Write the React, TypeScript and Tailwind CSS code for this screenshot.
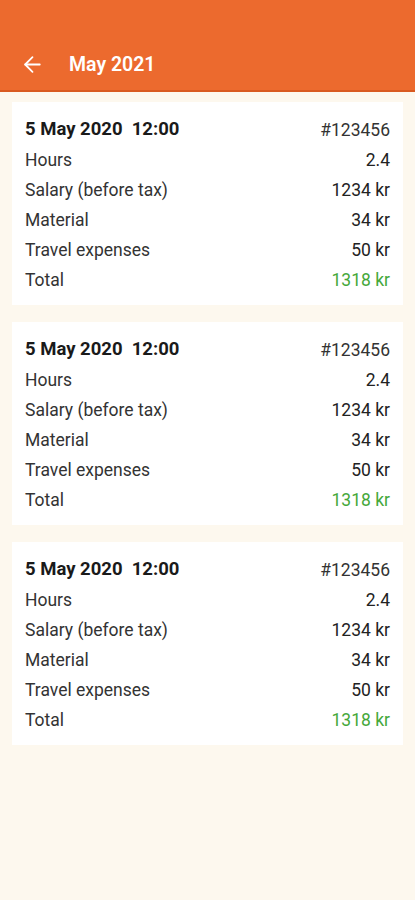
import { ArrowLeft } from 'lucide-react'

interface Entry {
  date: string
  ref: string
  hours: string
  salary: string
  material: string
  travel: string
  total: string
}

const entries: Entry[] = [
  { date: '5 May 2020\u00a0\u00a012:00', ref: '#123456', hours: '2.4', salary: '1234 kr', material: '34 kr', travel: '50 kr', total: '1318 kr' },
  { date: '5 May 2020\u00a0\u00a012:00', ref: '#123456', hours: '2.4', salary: '1234 kr', material: '34 kr', travel: '50 kr', total: '1318 kr' },
  { date: '5 May 2020\u00a0\u00a012:00', ref: '#123456', hours: '2.4', salary: '1234 kr', material: '34 kr', travel: '50 kr', total: '1318 kr' },
]

const Row = ({ label, value, green }: { label: string; value: string; green?: boolean }) => (
  <div className="flex items-center justify-between h-[30px] text-[17.5px] text-[#333333]">
    <span>{label}</span>
    <span className={green ? 'text-[#45a83a]' : 'text-[#222222]'}>{value}</span>
  </div>
)

const App = () => {
  return (
    <div className="min-h-[900px] bg-[#fdf8ee]" style={{ fontFamily: 'Roboto, "Noto Sans", sans-serif' }}>
      <header className="h-[92px] bg-[#ec6a2e] border-b-2 border-[#d95a20] flex items-end pb-[13px] px-[20px]">
        <ArrowLeft className="text-white w-[25px] h-[25px]" strokeWidth={1.7} />
        <h1 className="ml-[24px] text-white text-[19.5px] font-semibold leading-[25px]">May 2021</h1>
      </header>

      <div className="px-[12px] pt-[10px] space-y-[17px]">
        {entries.map((e, i) => (
          <div key={i} className="bg-white px-[13px] pt-[13px] pb-[10px]">
            <div className="flex items-center justify-between h-[30px]">
              <span className="font-bold text-[18.5px] text-[#1a1a1a]">{e.date}</span>
              <span className="text-[17.5px] text-[#333333]">{e.ref}</span>
            </div>
            <Row label="Hours" value={e.hours} />
            <Row label="Salary (before tax)" value={e.salary} />
            <Row label="Material" value={e.material} />
            <Row label="Travel expenses" value={e.travel} />
            <Row label="Total" value={e.total} green />
          </div>
        ))}
      </div>
    </div>
  )
}

export default App
